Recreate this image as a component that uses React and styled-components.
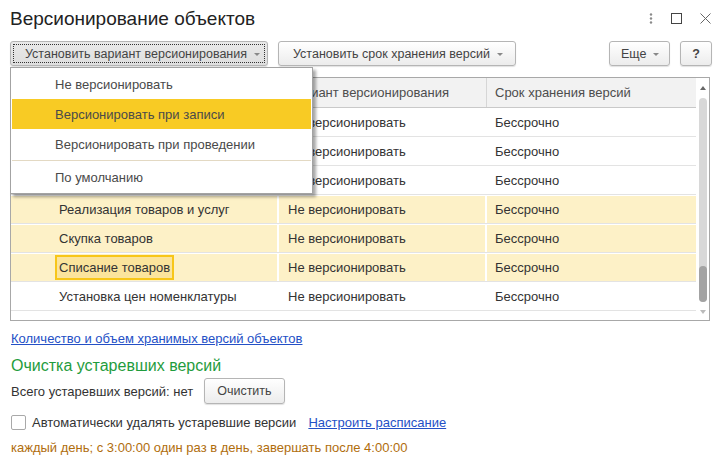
import React from 'react';
import styled, { createGlobalStyle } from 'styled-components';

const GlobalStyle = createGlobalStyle`
  body {
    margin: 0;
    background: #fff;
    font-family: Arial, "Liberation Sans", sans-serif;
    font-size: 13px;
    color: #333;
  }
`;

const Page = styled.div`
  width: 727px;
  height: 465px;
  box-sizing: border-box;
  padding: 0 15px 0 10px;
  overflow: hidden;
`;

const Header = styled.div`
  height: 36px;
  display: flex;
  align-items: center;
  justify-content: space-between;
`;

const Title = styled.h1`
  margin: 0;
  font-size: 19px;
  font-weight: normal;
  color: #222;
  padding-top: 1px;
`;

const WindowIcons = styled.div`
  display: flex;
  align-items: center;
  gap: 18px;
  padding-right: 1px;
  color: #666;
`;

const Toolbar = styled.div`
  margin-top: 5px;
  display: flex;
  align-items: center;
`;

const MenuAnchor = styled.div`
  position: relative;
`;

const Button = styled.button`
  height: ${p => p.$h || 25}px;
  width: ${p => (p.$w ? `${p.$w}px` : 'auto')};
  box-sizing: border-box;
  padding: 0 ${p => p.$pr ?? 12}px 0 ${p => p.$pl ?? 12}px;
  margin-left: ${p => p.$ml || 0}px;
  border: 1px solid #b5b5b5;
  border-radius: 3px;
  background: ${p => (p.$pressed ? 'linear-gradient(#e9e9e9, #dedede)' : 'linear-gradient(#ffffff, #ececec)')};
  box-shadow: 0 1px 1px rgba(0, 0, 0, 0.12);
  font-family: Arial, "Liberation Sans", sans-serif;
  font-size: 12.5px;
  font-weight: ${p => (p.$bold ? 'bold' : 'normal')};
  color: #444;
  white-space: nowrap;
  display: flex;
  align-items: center;
  justify-content: ${p => (p.$w ? 'flex-start' : 'center')};
  gap: 7px;
  position: relative;
  cursor: pointer;
  &::after {
    content: '';
    display: ${p => (p.$pressed ? 'block' : 'none')};
    position: absolute;
    inset: 2px;
    border: 1px dotted #333;
  }
`;

const Caret = styled.span`
  width: 0;
  height: 0;
  border-left: 3px solid transparent;
  border-right: 3px solid transparent;
  border-top: 3px solid #888;
  margin-top: 1px;
`;

const Spacer = styled.div`
  flex: 1;
`;

const Menu = styled.div`
  position: absolute;
  left: 0;
  top: 26px;
  width: 303px;
  box-sizing: border-box;
  background: #fff;
  border: 1px solid #a3a3a3;
  box-shadow: 3px 3px 3px rgba(0, 0, 0, 0.35);
  padding: 1px;
  z-index: 5;
`;

const MenuItem = styled.div`
  height: 30px;
  display: flex;
  align-items: center;
  padding-left: 43px;
  color: #4a4a4a;
  background: ${p => (p.$active ? '#f8cb24' : 'transparent')};
`;

const MenuSeparator = styled.div`
  height: 1px;
  margin: 1px 0 1px;
  background: #e3d9c3;
`;

const Table = styled.div`
  margin-top: 11px;
  margin-right: 2px;
  height: 244px;
  box-sizing: border-box;
  border: 1px solid #a8a8a8;
  display: flex;
`;

const Grid = styled.div`
  flex: 1;
  display: flex;
  flex-direction: column;
`;

const HeadRow = styled.div`
  display: grid;
  grid-template-columns: 268px 208px 1fr;
  height: 30px;
  background: #f2f2f2;
  border-bottom: 1px solid #c9c9c9;
  box-sizing: border-box;
`;

const HeadCell = styled.div`
  display: flex;
  align-items: center;
  padding-left: ${p => p.$pl}px;
  color: #4d4d4d;
  white-space: nowrap;
  border-right: ${p => (p.$last ? 'none' : '1px solid #d6d6d6')};
`;

const Row = styled.div`
  display: grid;
  grid-template-columns: 268px 208px 1fr;
  height: 29px;
  box-sizing: border-box;
  border-top: 1px solid #fff;
  border-bottom: 1px solid #e3e3e3;
  background: ${p => (p.$hl ? '#fdf1c7' : '#fff')};
`;

const Cell = styled.div`
  display: flex;
  align-items: center;
  padding-left: ${p => p.$pl}px;
  color: #333;
  border-right: ${p => (p.$last ? 'none' : '2px solid #fff')};
  white-space: nowrap;
`;

const Current = styled.span`
  margin-left: -4px;
  padding: 0 2px;
  height: 21px;
  display: flex;
  align-items: center;
  border: 2px solid #f7c619;
  background: #fbe49c;
`;

const Scroll = styled.div`
  width: 13px;
  display: flex;
  flex-direction: column;
  align-items: center;
  padding: 8px 0 6px;
  box-sizing: border-box;
`;

const ArrowUp = styled.span`
  width: 0;
  height: 0;
  border-left: 3px solid transparent;
  border-right: 3px solid transparent;
  border-bottom: 4px solid #666;
`;

const ArrowDown = styled.span`
  width: 0;
  height: 0;
  border-left: 3px solid transparent;
  border-right: 3px solid transparent;
  border-top: 4px solid #bbb;
`;

const Track = styled.div`
  flex: 1;
  width: 8px;
  margin: 8px 0;
  border-radius: 4px;
  background: #d8d8d8;
  display: flex;
  flex-direction: column;
  justify-content: flex-end;
`;

const Thumb = styled.div`
  height: 36px;
  border-radius: 4px;
  background: #a3a3a3;
`;

const Link = styled.a`
  color: #2450c6;
  text-decoration: underline;
  cursor: pointer;
  margin-left: ${p => p.$ml || 0}px;
`;

const LinkLine = styled.div`
  margin-top: 10px;
  line-height: 15px;
  padding-left: 1px;
`;

const GroupTitle = styled.div`
  margin-top: 10px;
  font-size: 16px;
  line-height: 20px;
  color: #1f9c3d;
  padding-left: 1px;
`;

const Line = styled.div`
  display: flex;
  align-items: center;
  gap: ${p => p.$gap || 0}px;
  margin-top: ${p => p.$mt || 0}px;
  padding-left: 1px;
`;

const Check = styled.span`
  width: 15px;
  height: 15px;
  box-sizing: border-box;
  border: 1px solid #a9a9a9;
  border-radius: 2px;
  background: #fff;
  margin-right: 6px;
`;

const Schedule = styled.div`
  margin-top: 10px;
  line-height: 16px;
  color: #b06d0d;
  padding-left: 1px;
`;

const rows = [
  { name: '', hl: false },
  { name: '', hl: false },
  { name: '', hl: false },
  { name: 'Реализация товаров и услуг', hl: true },
  { name: 'Скупка товаров', hl: true },
  { name: 'Списание товаров', hl: true, current: true },
  { name: 'Установка цен номенклатуры', hl: false },
];

const App = () => {
  return (
    <Page>
      <GlobalStyle />
      <Header>
        <Title>Версионирование объектов</Title>
        <WindowIcons>
          <svg width="4" height="11" viewBox="0 0 4 11">
            <circle cx="2" cy="1.5" r="1.2" fill="#8a8a8a" />
            <circle cx="2" cy="5.5" r="1.2" fill="#8a8a8a" />
            <circle cx="2" cy="9.5" r="1.2" fill="#8a8a8a" />
          </svg>
          <svg width="11" height="11" viewBox="0 0 11 11">
            <rect x="0.5" y="0.5" width="10" height="10" fill="none" stroke="#444" />
          </svg>
          <svg width="11" height="11" viewBox="0 0 11 11">
            <path d="M0.5 0.5 L10.5 10.5 M10.5 0.5 L0.5 10.5" stroke="#666" strokeWidth="1" />
          </svg>
        </WindowIcons>
      </Header>

      <Toolbar>
        <MenuAnchor>
          <Button $pressed $w={258} $pl={14} $pr={6}>
            Установить вариант версионирования <Caret />
          </Button>
          <Menu>
            <MenuItem>Не версионировать</MenuItem>
            <MenuItem $active>Версионировать при записи</MenuItem>
            <MenuItem>Версионировать при проведении</MenuItem>
            <MenuSeparator />
            <MenuItem>По умолчанию</MenuItem>
          </Menu>
        </MenuAnchor>
        <Button $ml={10} $pl={14} $pr={12}>
          Установить срок хранения версий <Caret />
        </Button>
        <Spacer />
        <Button $pl={11} $pr={10}>
          Еще <Caret />
        </Button>
        <Button $ml={10} $pl={11} $pr={11} $bold>
          ?
        </Button>
      </Toolbar>

      <Table>
        <Grid>
          <HeadRow>
            <HeadCell $pl={48} />
            <HeadCell $pl={9}>Вариант версионирования</HeadCell>
            <HeadCell $pl={8} $last>Срок хранения версий</HeadCell>
          </HeadRow>
          {rows.map((r, i) => (
            <Row key={i} $hl={r.hl}>
              <Cell $pl={48}>{r.current ? <Current>{r.name}</Current> : r.name}</Cell>
              <Cell $pl={9}>Не версионировать</Cell>
              <Cell $pl={8} $last>Бессрочно</Cell>
            </Row>
          ))}
        </Grid>
        <Scroll>
          <ArrowUp />
          <Track>
            <Thumb />
          </Track>
          <ArrowDown />
        </Scroll>
      </Table>

      <LinkLine>
        <Link>Количество и объем хранимых версий объектов</Link>
      </LinkLine>
      <GroupTitle>Очистка устаревших версий</GroupTitle>
      <Line $gap={11} $mt={2}>
        <span>Всего устаревших версий: нет</span>
        <Button $h={26} $pl={12} $pr={12}>Очистить</Button>
      </Line>
      <Line $mt={11}>
        <Check />
        <span>Автоматически удалять устаревшие версии</span>
        <Link $ml={12}>Настроить расписание</Link>
      </Line>
      <Schedule>каждый день; с 3:00:00 один раз в день, завершать после 4:00:00</Schedule>
    </Page>
  );
};

export default App;
